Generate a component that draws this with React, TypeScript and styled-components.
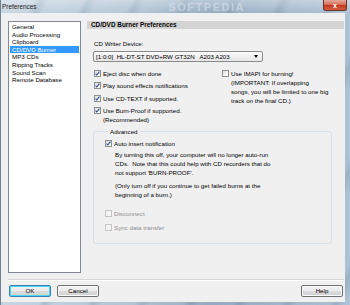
import { FunctionComponent } from "react";
import styled, { createGlobalStyle } from "styled-components";

const GlobalStyle = createGlobalStyle`
  html, body {
    margin: 0;
    padding: 0;
    background: #ffffff;
  }
  body {
    width: 350px;
    height: 305px;
    overflow: hidden;
    font-family: "Liberation Sans", Arial, sans-serif;
    color: #000000;
  }
`;

const Window = styled.div`
  width: 350px;
  height: 305px;
  display: flex;
  flex-direction: column;
  box-sizing: border-box;
  border-left: 1px solid #6f8295;
  background:
    linear-gradient(180deg, rgba(255, 255, 255, 0.35), rgba(255, 255, 255, 0) 14px),
    repeating-linear-gradient(115deg, rgba(60, 90, 120, 0) 0px, rgba(60, 90, 120, 0) 30px, rgba(60, 90, 120, 0.16) 36px, rgba(60, 90, 120, 0) 44px),
    linear-gradient(90deg, #c8d6e3 0%, #b0c3d4 40%, #93aac0 60%, #adc2d5 100%);
`;

const TitleBar = styled.div`
  height: 13px;
  display: flex;
  flex-direction: row;
  align-items: center;
  padding-left: 1px;
  flex-shrink: 0;
`;

const Title = styled.span`
  font-size: 6.4px;
  line-height: 13px;
  color: #1b1b1b;
`;

const Watermark = styled.span`
  margin-left: 132px;
  font-size: 11px;
  font-weight: bold;
  letter-spacing: 1.5px;
  line-height: 12px;
  color: rgba(235, 242, 250, 0.45);
  white-space: nowrap;
`;

const CloseButton = styled.div`
  margin-left: auto;
  margin-right: 3px;
  align-self: flex-start;
  width: 24px;
  height: 11px;
  box-sizing: border-box;
  border: 1px solid #6b3328;
  border-top: none;
  border-radius: 0 0 3px 3px;
  background: linear-gradient(180deg, #e6a99c 0%, #d66f59 45%, #c2381f 55%, #d5613f 100%);
  display: flex;
  align-items: center;
  justify-content: center;
  color: #ffffff;
  font-size: 7px;
  font-weight: bold;
  line-height: 1;
`;

const Body = styled.div`
  flex: 1;
  margin: 0 5px 3px 0;
  background: #f0f0f0;
  padding: 8px 1px 5px 7px;
  display: flex;
  flex-direction: column;
  font-size: 6.2px;
`;

const MainRow = styled.div`
  height: 252px;
  display: flex;
  flex-direction: row;
  gap: 6px;
`;

const ListBox = styled.div`
  width: 73px;
  box-sizing: border-box;
  border: 1px solid #828790;
  background: #ffffff;
  padding: 1px 0;
`;

const ListItem = styled.div<{ $selected?: boolean }>`
  margin: 0 1px;
  padding-left: 2px;
  height: 7.6px;
  line-height: 7.6px;
  white-space: nowrap;
  background: ${(p) => (p.$selected ? "#3399ff" : "transparent")};
  color: ${(p) => (p.$selected ? "#ffffff" : "#000000")};
`;

const Panel = styled.div`
  flex: 1;
  display: flex;
  flex-direction: column;
`;

const PanelHeader = styled.div`
  height: 8px;
  line-height: 8px;
  background: #d4d4d4;
  padding-left: 4px;
  font-weight: bold;
  font-size: 6.4px;
`;

const FieldLabel = styled.div`
  margin-top: 11px;
  padding-left: 7px;
  line-height: 8px;
`;

const Combo = styled.div`
  margin-top: 3px;
  margin-left: 6px;
  width: 170px;
  height: 11px;
  box-sizing: border-box;
  border: 1px solid #8a8a8a;
  border-radius: 2px;
  background: linear-gradient(180deg, #fbfbfb 0%, #f0f0f0 50%, #e6e6e6 100%);
  display: flex;
  flex-direction: row;
  align-items: center;
  padding: 0 4px 0 2px;
  white-space: pre;
`;

const ComboArrow = styled.span`
  margin-left: auto;
  width: 0;
  height: 0;
  border-left: 2.5px solid transparent;
  border-right: 2.5px solid transparent;
  border-top: 3px solid #000000;
`;

const OptionsRow = styled.div`
  margin-top: 6.5px;
  padding-left: 7px;
  display: flex;
  flex-direction: row;
`;

const OptionsColumn = styled.div<{ $width?: number }>`
  width: ${(p) => (p.$width ? `${p.$width}px` : "auto")};
  display: flex;
  flex-direction: column;
  gap: 3.5px;
`;

const CheckRow = styled.div<{ $disabled?: boolean }>`
  display: flex;
  flex-direction: row;
  align-items: flex-start;
  gap: 2px;
  line-height: 9px;
  white-space: nowrap;
  color: ${(p) => (p.$disabled ? "#8d8d8d" : "#000000")};
`;

const Box = styled.span<{ $disabled?: boolean }>`
  margin-top: 1px;
  width: 7px;
  height: 7px;
  flex-shrink: 0;
  box-sizing: border-box;
  border: 1px solid ${(p) => (p.$disabled ? "#c4c4c4" : "#8e8f8f")};
  background: ${(p) =>
    p.$disabled
      ? "#f4f4f4"
      : "linear-gradient(135deg, #dcdcdc 0%, #f6f6f6 60%, #ffffff 100%)"};
  display: flex;
  align-items: center;
  justify-content: center;
`;

const Group = styled.fieldset`
  margin: 3px 0 0 6px;
  width: 239px;
  box-sizing: border-box;
  border: 1px solid #d5dfe5;
  border-radius: 3px;
  padding: 0 0 11px 11px;
  display: flex;
  flex-direction: column;
`;

const GroupLegend = styled.legend`
  margin-left: 3px;
  padding: 0 2px;
  line-height: 9px;
`;

const GroupTop = styled.div`
  margin-top: 3.3px;
`;

const Note = styled.div<{ $gap: number }>`
  margin-top: ${(p) => p.$gap}px;
  margin-left: 10px;
  line-height: 9px;
  white-space: nowrap;
`;

const DisabledStack = styled.div`
  margin-top: 10px;
  display: flex;
  flex-direction: column;
  gap: 5px;
`;

const Separator = styled.div`
  margin-top: 6px;
  border-top: 1px solid #d7d7d7;
  border-bottom: 1px solid #ffffff;
`;

const ButtonRow = styled.div`
  margin-top: 4px;
  padding: 0 1px;
  display: flex;
  flex-direction: row;
  gap: 6px;
`;

const Button = styled.div<{ $default?: boolean; $right?: boolean }>`
  width: 42px;
  height: 12px;
  box-sizing: border-box;
  margin-left: ${(p) => (p.$right ? "auto" : "0")};
  border: 1px solid ${(p) => (p.$default ? "#3c7fb1" : "#707070")};
  border-radius: 2px;
  background: linear-gradient(180deg, #f2f2f2 0%, #ebebeb 48%, #dddddd 52%, #cfcfcf 100%);
  box-shadow: inset 0 0 0 1px ${(p) => (p.$default ? "#48d8fb" : "#fcfcfc")};
  display: flex;
  align-items: center;
  justify-content: center;
  line-height: 1;
`;

const Check: FunctionComponent<{ checked?: boolean; disabled?: boolean }> = ({
  checked,
  disabled,
}) => (
  <Box $disabled={disabled}>
    {checked && (
      <svg width="5" height="5" viewBox="0 0 5 5">
        <path d="M0.6 2.6 L1.8 4 L4.4 0.7" fill="none" stroke="#2b4a8c" strokeWidth="1.1" />
      </svg>
    )}
  </Box>
);

const listItems = [
  "General",
  "Audio Processing",
  "Clipboard",
  "CD/DVD Burner",
  "MP3 CDs",
  "Ripping Tracks",
  "Sound Scan",
  "Remote Database",
];

const App: FunctionComponent = () => {
  return (
    <>
      <GlobalStyle />
      <Window>
        <TitleBar>
          <Title>Preferences</Title>
          <Watermark>SOFTPEDIA</Watermark>
          <CloseButton>x</CloseButton>
        </TitleBar>
        <Body>
          <MainRow>
            <ListBox>
              {listItems.map((item) => (
                <ListItem key={item} $selected={item === "CD/DVD Burner"}>
                  {item}
                </ListItem>
              ))}
            </ListBox>
            <Panel>
              <PanelHeader>CD/DVD Burner Preferences</PanelHeader>
              <FieldLabel>CD Writer Device:</FieldLabel>
              <Combo>
                <span>{"[1:0:0]  HL-DT-ST DVD+RW GT32N   A203 A203"}</span>
                <ComboArrow />
              </Combo>
              <OptionsRow>
                <OptionsColumn $width={128}>
                  <CheckRow>
                    <Check checked />
                    <span>Eject disc when done</span>
                  </CheckRow>
                  <CheckRow>
                    <Check checked />
                    <span>Play sound effects notifications</span>
                  </CheckRow>
                  <CheckRow>
                    <Check checked />
                    <span>Use CD-TEXT if supported.</span>
                  </CheckRow>
                  <CheckRow>
                    <Check checked />
                    <span>
                      Use Burn-Proof if supported.
                      <br />
                      (Recommended)
                    </span>
                  </CheckRow>
                </OptionsColumn>
                <OptionsColumn>
                  <CheckRow>
                    <Check />
                    <span>
                      Use IMAPI for burning!
                      <br />
                      (IMPORTANT: If overlapping
                      <br />
                      songs, you will be limited to one big
                      <br />
                      track on the final CD.)
                    </span>
                  </CheckRow>
                </OptionsColumn>
              </OptionsRow>
              <Group>
                <GroupLegend>Advanced</GroupLegend>
                <GroupTop>
                  <CheckRow>
                    <Check checked />
                    <span>Auto insert notification</span>
                  </CheckRow>
                </GroupTop>
                <Note $gap={2}>
                  By turning this off, your computer will no longer auto-run
                  <br />
                  CDs.&nbsp; Note that this could help with CD recorders that do
                  <br />
                  not support 'BURN-PROOF'.
                </Note>
                <Note $gap={4}>
                  (Only turn off if you continue to get failed burns at the
                  <br />
                  beginning of a burn.)
                </Note>
                <DisabledStack>
                  <CheckRow $disabled>
                    <Check disabled />
                    <span>Disconnect</span>
                  </CheckRow>
                  <CheckRow $disabled>
                    <Check disabled />
                    <span>Sync data transfer</span>
                  </CheckRow>
                </DisabledStack>
              </Group>
            </Panel>
          </MainRow>
          <Separator />
          <ButtonRow>
            <Button $default>OK</Button>
            <Button>Cancel</Button>
            <Button $right>Help</Button>
          </ButtonRow>
        </Body>
      </Window>
    </>
  );
};

export default App;
